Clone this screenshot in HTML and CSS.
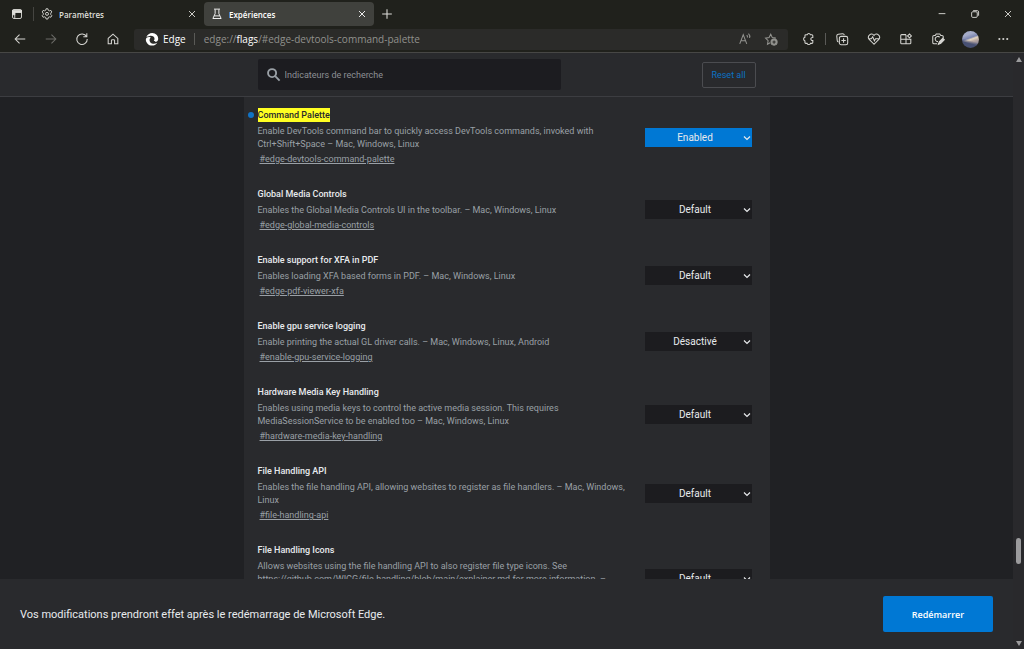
FILE: index.html
```html
<!DOCTYPE html>
<html lang="fr">
<head>
    <meta charset="UTF-8">
    <meta name="viewport" content="width=device-width, initial-scale=1.0">
    <title>Expériences</title>
    <link rel="stylesheet" href="styles.css">
</head>
<body>
<svg class="sprite" aria-hidden="true">
    <symbol id="close" viewBox="0 0 16 16"><path d="M4 4l8 8M12 4l-8 8"/></symbol>
    <symbol id="chevron" viewBox="0 0 8 8"><path d="M1 2.5l3 3 3-3"/></symbol>
</svg>

<!-- Tabs -->
<header class="tabs">
    <button class="tab-menu" aria-label="Menu des onglets">
        <svg class="icon small" viewBox="0 0 16 16"><rect x="2" y="2" width="12" height="12" rx="2"/><path d="M2 3h12v3H2zM2 5h3v4H2z" fill="currentColor"/><path d="M5 6v8"/></svg>
    </button>
    <div class="tab">
        <svg class="icon small" viewBox="0 0 16 16"><path d="M6.8 1h2.400l.5 2 1.500.8 2-.6 1.200 2.100L13 6.800v1.900l1.400 1.500-1.200 2.100-2-.5-1.500.8-.5 2.100H6.800l-.5-2.100-1.500-.8-2 .5-1.200-2.100L3 8.700V6.800L1.600 5.300l1.200-2.100 2 .6 1.500-.8z"/><circle cx="8" cy="7.800" r="2"/></svg>
        <span class="tab-title">Paramètres</span>
        <button class="tab-close" aria-label="Fermer Paramètres"><svg class="icon small"><use href="#close"/></svg></button>
    </div>
    <div class="tab active">
        <svg class="icon small" viewBox="0 0 16 16"><path d="M4 1.500h8M5.500 2v5.500L2.500 14h11l-3-6.500V2M4.300 10.500h7.400"/></svg>
        <span class="tab-title">Expériences</span>
        <button class="tab-close" aria-label="Fermer Expériences"><svg class="icon small"><use href="#close"/></svg></button>
    </div>
    <button class="new-tab" aria-label="Nouvel onglet"><svg class="icon" viewBox="0 0 16 16"><path d="M8 2.500v11M2.500 8h11"/></svg></button>
    <div class="window-buttons">
        <button aria-label="Réduire"><svg class="icon small" viewBox="0 0 16 16"><path d="M3.500 7.500h9"/></svg></button>
        <button aria-label="Restaurer"><svg class="icon small" viewBox="0 0 16 16"><rect x="3.500" y="5" width="7.500" height="7.500" rx="1.500"/><path d="M5.500 3.500H11a1.800 1.800 0 0 1 1.800 1.800v5"/></svg></button>
        <button aria-label="Fermer"><svg class="icon small"><use href="#close"/></svg></button>
    </div>
</header>

<!-- Address bar -->
<nav class="toolbar">
    <div class="nav-buttons">
        <button aria-label="Précédent"><svg class="icon" viewBox="0 0 16 16"><path d="M14 8H2.500M7.500 3l-5 5 5 5"/></svg></button>
        <button class="dim" aria-label="Suivant"><svg class="icon" viewBox="0 0 16 16"><path d="M2 8h11.500M8.500 3l5 5-5 5"/></svg></button>
        <button aria-label="Actualiser"><svg class="icon" viewBox="0 0 16 16"><path d="M13.200 5.200A6 6 0 1 0 14 8M13.500 1.500v4h-4"/></svg></button>
        <button aria-label="Accueil"><svg class="icon" viewBox="0 0 16 16"><path d="M2.500 7.300L8 2.500l5.500 4.800v6.200h-3.700V9.800a1 1 0 0 0-1-1H7.200a1 1 0 0 0-1 1v3.700H2.500z"/></svg></button>
    </div>
    <div class="address">
        <svg class="edge-logo" viewBox="0 0 16 16">
            <path d="M1.500 6C3 .8 10-.8 13.500 3.500c2.500 3 2 7-1 7.500-1.800.2-3-.6-2-1.800C12 6.500 9 3.800 5.500 4.500 3.800 4.800 2.300 5.200 1.500 6z"/>
            <path d="M1 8.200c.3-2.200 3.500-3 5.500-2C4.300 8 4.800 12 8 13.200c2 .7 4 .2 6-1C11.500 16.500 5.500 16.500 2.700 13 1.500 11.500.8 10 1 8.200z"/>
        </svg>
        <span class="site">Edge</span>
        <span class="divider"></span>
        <span class="url">edge://<b>flags</b>/#edge-devtools-command-palette</span>
        <button aria-label="Lecture à voix haute"><svg class="icon" viewBox="0 0 16 16"><path d="M2 13.500L6 3l4 10.500M3.300 10h5.400M10 3.500c.8.800 1 1.700.8 2.800M12 1.800c1.500 1.500 1.800 3.200 1.200 5"/></svg></button>
        <button aria-label="Ajouter aux favoris"><svg class="icon" viewBox="0 0 16 16"><path d="M7 12.200L4 14l.7-4L1.800 7l4-.6L7.700 2.500l1.800 3.900 4 .6"/><circle cx="11.500" cy="11.500" r="3.500" fill="currentColor"/><path d="M9.700 11.500h3.600M11.500 9.700v3.600" stroke="#2b2b29"/></svg></button>
    </div>
    <div class="extension">
        <button aria-label="Extensions"><svg class="icon" viewBox="0 0 16 16"><path d="M5.500 3.200H7a2 2 0 0 1 3.800 0h1.700a1 1 0 0 1 1 1v2c-3-.2-3 3.800 0 3.600v2.200a1 1 0 0 1-1 1h-1.700a2 2 0 0 1-3.800 0H5.500a1 1 0 0 1-1-1v-1.800a2.200 2.200 0 0 1 0-4.200V4.200a1 1 0 0 1 1-1z"/></svg></button>
    </div>
    <span class="divider"></span>
    <div class="tools">
        <button aria-label="Collections"><svg class="icon" viewBox="0 0 16 16"><path d="M4 11.500A2 2 0 0 1 2.500 9.500L2 4.500a2 2 0 0 1 1.700-2l5-.5a2 2 0 0 1 2 1.500"/><rect x="5" y="5" width="9.500" height="9.500" rx="2"/><path d="M9.800 7.200v5M7.300 9.800h5"/></svg></button>
        <button aria-label="Performances"><svg class="icon" viewBox="0 0 16 16"><path d="M8 14L2.500 8.500C-.5 4.500 5-.2 8 4c3-4.200 8.500.5 5.500 4.500zM2 7.800h3l1.500-2.300L8.500 10l1.300-2.200H14"/></svg></button>
        <button aria-label="Applications"><svg class="icon" viewBox="0 0 16 16"><path d="M8 3H3a1 1 0 0 0-1 1v8.500a1 1 0 0 0 1 1h9.500a1 1 0 0 0 1-1V8.300H2M8 3v10.500M9.800 4.500L12 2.300l2.200 2.200L12 6.700z"/></svg></button>
        <button aria-label="Capture Web"><svg class="icon" viewBox="0 0 16 16"><path d="M7 13.500H3.500a1.500 1.500 0 0 1-1.500-1.500V5.500A1.500 1.500 0 0 1 3.500 4h1.300L6 2.200h4L11.200 4h1.300A1.500 1.500 0 0 1 14 5.500V7M10 6a3 3 0 1 0-2 5"/><path d="M8.500 14l1-2.800 4-4 1.700 1.700-4 4z" fill="currentColor"/></svg></button>
        <button aria-label="Profil"><span class="avatar"></span></button>
        <button aria-label="Paramètres et plus"><svg class="icon" viewBox="0 0 16 16"><g fill="currentColor" stroke="none"><circle cx="5" cy="8" r="1.200"/><circle cx="9.500" cy="8" r="1.200"/><circle cx="14" cy="8" r="1.200"/></g></svg></button>
    </div>
</nav>

<div class="viewport">
    <main class="page">
        <form class="search-bar">
            <div class="search-inner">
                <label class="search">
                    <svg viewBox="0 0 16 16"><circle cx="6.500" cy="6.500" r="4.300"/><path d="M9.800 9.800l4.700 4.700"/></svg>
                    <input type="text" placeholder="Indicateurs de recherche" aria-label="Indicateurs de recherche">
                </label>
                <button type="button" class="reset">Reset all</button>
            </div>
        </form>

        <div class="content">
            <div class="flags">
                <section class="flag changed">
                    <div class="text">
                        <h3 id="f1"><mark>Command Palette</mark></h3>
                        <p>Enable DevTools command bar to quickly access DevTools commands, invoked with Ctrl+Shift+Space – Mac, Windows, Linux</p>
                        <a href="#edge-devtools-command-palette">#edge-devtools-command-palette</a>
                    </div>
                    <div class="choice">
                        <select aria-labelledby="f1"><option>Default</option><option selected>Enabled</option><option>Désactivé</option></select>
                        <svg><use href="#chevron"/></svg>
                    </div>
                </section>
                <section class="flag">
                    <div class="text">
                        <h3 id="f2">Global Media Controls</h3>
                        <p>Enables the Global Media Controls UI in the toolbar. – Mac, Windows, Linux</p>
                        <a href="#edge-global-media-controls">#edge-global-media-controls</a>
                    </div>
                    <div class="choice">
                        <select aria-labelledby="f2"><option>Default</option><option>Enabled</option><option>Désactivé</option></select>
                        <svg><use href="#chevron"/></svg>
                    </div>
                </section>
                <section class="flag">
                    <div class="text">
                        <h3 id="f3">Enable support for XFA in PDF</h3>
                        <p>Enables loading XFA based forms in PDF. – Mac, Windows, Linux</p>
                        <a href="#edge-pdf-viewer-xfa">#edge-pdf-viewer-xfa</a>
                    </div>
                    <div class="choice">
                        <select aria-labelledby="f3"><option>Default</option><option>Enabled</option><option>Désactivé</option></select>
                        <svg><use href="#chevron"/></svg>
                    </div>
                </section>
                <section class="flag">
                    <div class="text">
                        <h3 id="f4">Enable gpu service logging</h3>
                        <p>Enable printing the actual GL driver calls. – Mac, Windows, Linux, Android</p>
                        <a href="#enable-gpu-service-logging">#enable-gpu-service-logging</a>
                    </div>
                    <div class="choice">
                        <select aria-labelledby="f4"><option>Désactivé</option><option>Enabled</option></select>
                        <svg><use href="#chevron"/></svg>
                    </div>
                </section>
                <section class="flag">
                    <div class="text">
                        <h3 id="f5">Hardware Media Key Handling</h3>
                        <p>Enables using media keys to control the active media session. This requires MediaSessionService to be enabled too – Mac, Windows, Linux</p>
                        <a href="#hardware-media-key-handling">#hardware-media-key-handling</a>
                    </div>
                    <div class="choice">
                        <select aria-labelledby="f5"><option>Default</option><option>Enabled</option><option>Désactivé</option></select>
                        <svg><use href="#chevron"/></svg>
                    </div>
                </section>
                <section class="flag">
                    <div class="text">
                        <h3 id="f6">File Handling API</h3>
                        <p>Enables the file handling API, allowing websites to register as file handlers. – Mac, Windows, Linux</p>
                        <a href="#file-handling-api">#file-handling-api</a>
                    </div>
                    <div class="choice">
                        <select aria-labelledby="f6"><option>Default</option><option>Enabled</option><option>Désactivé</option></select>
                        <svg><use href="#chevron"/></svg>
                    </div>
                </section>
                <section class="flag">
                    <div class="text">
                        <h3 id="f7">File Handling Icons</h3>
                        <p>Allows websites using the file handling API to also register file type icons. See https://github.com/WICG/file-handling/blob/main/explainer.md for more information. –&nbsp;Mac,&nbsp;Windows,&nbsp;Linux</p>
                        <a href="#file-handling-icons">#file-handling-icons</a>
                    </div>
                    <div class="choice">
                        <select aria-labelledby="f7"><option>Default</option><option>Enabled</option><option>Désactivé</option></select>
                        <svg><use href="#chevron"/></svg>
                    </div>
                </section>
            </div>
        </div>

        <footer class="restart">
            <p>Vos modifications prendront effet après le redémarrage de Microsoft Edge.</p>
            <button>Redémarrer</button>
        </footer>
    </main>

    <div class="scrollbar" aria-hidden="true">
        <svg viewBox="0 0 6 5"><path d="M3 0l3 5H0z"/></svg>
        <span class="thumb"></span>
        <svg viewBox="0 0 6 5"><path d="M0 0h6L3 5z"/></svg>
    </div>
</div>
</body>
</html>
```

FILE: styles.css
```css
* {
    box-sizing: border-box;
}

body {
    display: flex;
    flex-direction: column;
    height: 100vh;
    margin: 0;
    overflow: hidden;
    background-color: #202124;
    color: #e8eaed;
    font-family: Roboto, sans-serif;
    font-size: 9px;
}

h3, p {
    margin: 0;
}

button {
    display: flex;
    align-items: center;
    justify-content: center;
    padding: 0;
    border: 0;
    background: none;
    color: inherit;
    font-family: inherit;
}

.sprite {
    position: absolute;
    width: 0;
    height: 0;
}

.icon {
    flex: none;
    width: 14px;
    height: 14px;
    fill: none;
    stroke: currentColor;
    stroke-width: 1.2;
}

.icon.small {
    width: 12px;
    height: 12px;
}

/* Tabs */
.tabs {
    display: flex;
    flex: none;
    align-items: center;
    height: 28px;
    background-color: #20211c;
    color: #deded9;
    font-family: "Open Sans", "Noto Sans", sans-serif;
}

.tab-menu {
    width: 34px;
    height: 14px;
    border-right: 1px solid #454541;
}

.tab {
    display: flex;
    align-items: center;
    gap: 6px;
    width: 170px;
    height: 24px;
    padding: 0 6px 0 7px;
    border-radius: 4px;
    font-size: 8px;
    font-weight: 600;
}

.tab.active {
    background-color: #40413d;
    color: #fff;
}

.tab-title {
    flex: 1;
}

.new-tab {
    width: 25px;
}

.window-buttons {
    display: flex;
    margin-left: auto;
}

.window-buttons button {
    width: 33px;
    height: 24px;
}

/* Address bar */
.toolbar {
    display: flex;
    flex: none;
    align-items: center;
    height: 25px;
    padding: 0 6px 2px 4px;
    border-bottom: 1px solid #474745;
    background-color: #20211c;
    color: #d5d5d1;
    font-family: "Open Sans", "Noto Sans", sans-serif;
}

.nav-buttons, .tools {
    display: flex;
}

.nav-buttons button {
    width: 31px;
}

.dim {
    color: #6c6c68;
}

.address {
    display: flex;
    flex: 1;
    align-items: center;
    height: 21px;
    margin-left: 6px;
    padding: 0 4px 0 11px;
    border-radius: 3px;
    background-color: #2b2b29;
    font-size: 10px;
}

.edge-logo {
    width: 14px;
    height: 14px;
    margin-right: 4px;
    fill: #fff;
}

.site {
    color: #fff;
}

.divider {
    width: 1px;
    height: 12px;
    background-color: #5a5a57;
}

.address .divider {
    margin: 0 9px 0 8px;
}

.url {
    flex: 1;
    color: #91918d;
}

.url b {
    color: #fff;
    font-weight: 400;
}

.address button {
    width: 26px;
    color: #93938f;
}

.extension {
    margin: 0 2px 0 4px;
}

.extension button {
    width: 31px;
}

.tools button {
    width: 32px;
}

.avatar {
    width: 17px;
    height: 17px;
    border-radius: 50%;
    background: linear-gradient(15deg, #475072 30%, transparent 45%), linear-gradient(160deg, #a5acc9 25%, #7c86b0 42%, #e2d4c0 50%, #b8a7a1 62%, #5a6288);
}

/* Page */
.viewport {
    display: flex;
    flex: 1;
    min-height: 0;
}

.page {
    display: flex;
    flex: 1;
    flex-direction: column;
    min-width: 0;
}

.search-bar {
    flex: none;
    padding: 6px 0;
    border-bottom: 1px solid #3c3d41;
    background-color: #292a2d;
}

.search-inner {
    display: flex;
    align-items: center;
    justify-content: space-between;
    max-width: 498px;
    margin: 0 auto;
}

.search {
    display: flex;
    align-items: center;
    gap: 4px;
    width: 303px;
    height: 31px;
    padding: 0 8px;
    border-radius: 2px;
    background-color: #1c1c20;
}

.search svg {
    width: 15px;
    height: 15px;
    fill: none;
    stroke: #9aa0a6;
    stroke-width: 2;
}

.search input {
    flex: 1;
    padding: 0;
    border: 0;
    outline: 0;
    background: none;
    color: #e8eaed;
    font-family: inherit;
    font-size: 9px;
}

.search input::placeholder {
    color: #8c9095;
}

.reset {
    width: 54px;
    height: 26px;
    border: 1px solid #4b4c50;
    border-radius: 2px;
    color: #0b72c4;
    font-size: 9px;
}

.content {
    flex: 1;
    min-height: 0;
    overflow: hidden;
}

.flags {
    max-width: 526px;
    min-height: 100%;
    margin: 0 auto;
    padding: 11px 18px 0 14px;
    background-color: #292a2d;
}

.flag {
    position: relative;
    display: flex;
    align-items: center;
    gap: 8px;
    margin-bottom: 21px;
}

/* Blue dot beside a modified flag */
.changed::before {
    content: "";
    position: absolute;
    top: 4px;
    left: -10px;
    width: 6px;
    height: 6px;
    border-radius: 50%;
    background-color: #1173c5;
}

.text {
    flex: 1;
    line-height: 13px;
}

.flag h3 {
    margin-bottom: 3px;
    font-size: 9px;
    font-weight: 500;
    line-height: 14px;
}

.flag mark {
    display: inline-block;
    background-color: #ff2;
    color: #292a2d;
}

.flag p {
    color: #9aa0a6;
}

.flag a {
    display: block;
    width: fit-content;
    margin: 2px 0 0 2px;
    color: #9aa0a6;
}

.choice {
    position: relative;
    flex: none;
    width: 107px;
    height: 19px;
}

.choice select {
    width: 100%;
    height: 100%;
    padding: 0 6px 0 0;
    border: 0;
    border-radius: 0;
    appearance: none;
    background-color: #1c1c1f;
    color: #e8eaed;
    font-family: inherit;
    font-size: 10px;
    text-align: center;
    text-align-last: center;
}

.changed select {
    background-color: #0078d4;
}

.choice svg {
    position: absolute;
    top: 6px;
    right: 1px;
    width: 8px;
    height: 8px;
    fill: none;
    stroke: #e8eaed;
    stroke-width: 1.2;
    pointer-events: none;
}

.restart {
    display: flex;
    flex: none;
    align-items: center;
    justify-content: space-between;
    height: 70px;
    padding: 0 20px;
    background-color: #292a2d;
    font-size: 11px;
}

.restart button {
    width: 110px;
    height: 36px;
    border-radius: 2px;
    background-color: #0078d4;
    color: #fff;
    font-family: "Open Sans", "Noto Sans", sans-serif;
    font-size: 9px;
    font-weight: 600;
}

.scrollbar {
    display: flex;
    flex: none;
    flex-direction: column;
    align-items: center;
    justify-content: space-between;
    width: 11px;
    padding: 4px 0 3px;
    background-color: #29292c;
}

.scrollbar svg {
    width: 6px;
    height: 5px;
    fill: #9b9b9d;
}

.thumb {
    width: 5px;
    height: 26px;
    margin-top: auto;
    margin-bottom: 77px;
    border-radius: 3px;
    background-color: #9b9b9d;
}
```
